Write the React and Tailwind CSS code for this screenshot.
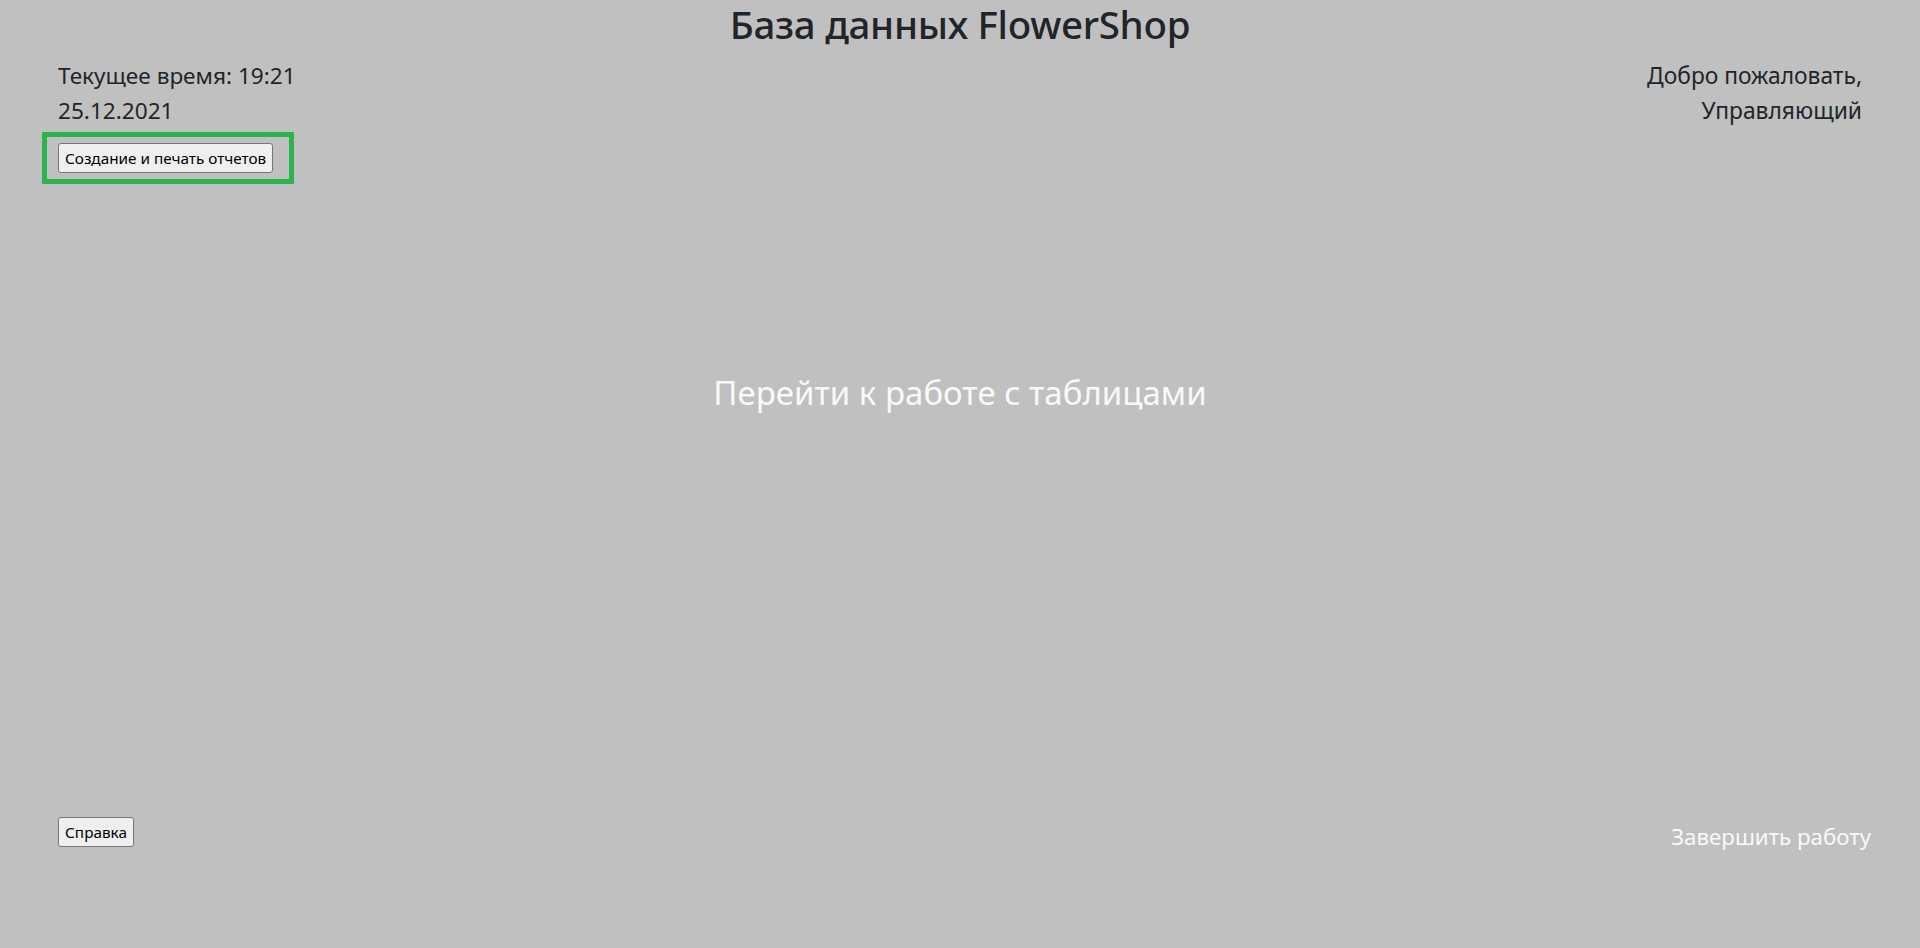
export default function App() {
    return (
        <div
            className="h-[948px] w-full bg-[#c0c0c0] text-[#212529] flex flex-col"
            style={{ fontFamily: '"Noto Sans", "Open Sans", sans-serif' }}
        >
            {/* Header */}
            <h1 className="text-center text-[38.5px] font-medium leading-[48px] h-[48px] tracking-[-0.3px]">
                База данных FlowerShop
            </h1>

            <div className="flex justify-between px-[58px] mt-[10px]">
                <div className="flex flex-col">
                    <div className="text-[22.6px] leading-[35px]">
                        <p>Текущее время: 19:21</p>
                        <p>25.12.2021</p>
                    </div>
                    <div className="mt-[4px] -ml-[16px] w-[252px] h-[52px] border-[5px] border-[#2db34a] pl-[11px] pt-[6px]">
                        <button className="w-[215px] h-[30px] px-[6px] bg-[#efefef] border border-[#767676] rounded-[3px] text-[15.3px] text-black whitespace-nowrap">
                            Создание и печать отчетов
                        </button>
                    </div>
                </div>
                <div className="text-right text-[22.8px] leading-[35px]">
                    <p>Добро пожаловать,</p>
                    <p>Управляющий</p>
                </div>
            </div>

            {/* Center link */}
            <div className="flex-1 flex justify-center pt-[185px]">
                <a className="text-[#f8f9fa] text-[33px] leading-[48px] h-[48px] cursor-pointer">
                    Перейти к работе с таблицами
                </a>
            </div>

            {/* Footer */}
            <div className="flex justify-between items-start pr-[49px] pl-[58px] pb-[94px]">
                <button className="w-[76px] h-[30px] px-[6px] bg-[#efefef] border border-[#767676] rounded-[3px] text-[15.3px] text-black">
                    Справка
                </button>
                <a className="text-[#f8f9fa] text-[22.3px] leading-[35px] mt-[2px] cursor-pointer">
                    Завершить работу
                </a>
            </div>
        </div>
    );
}
